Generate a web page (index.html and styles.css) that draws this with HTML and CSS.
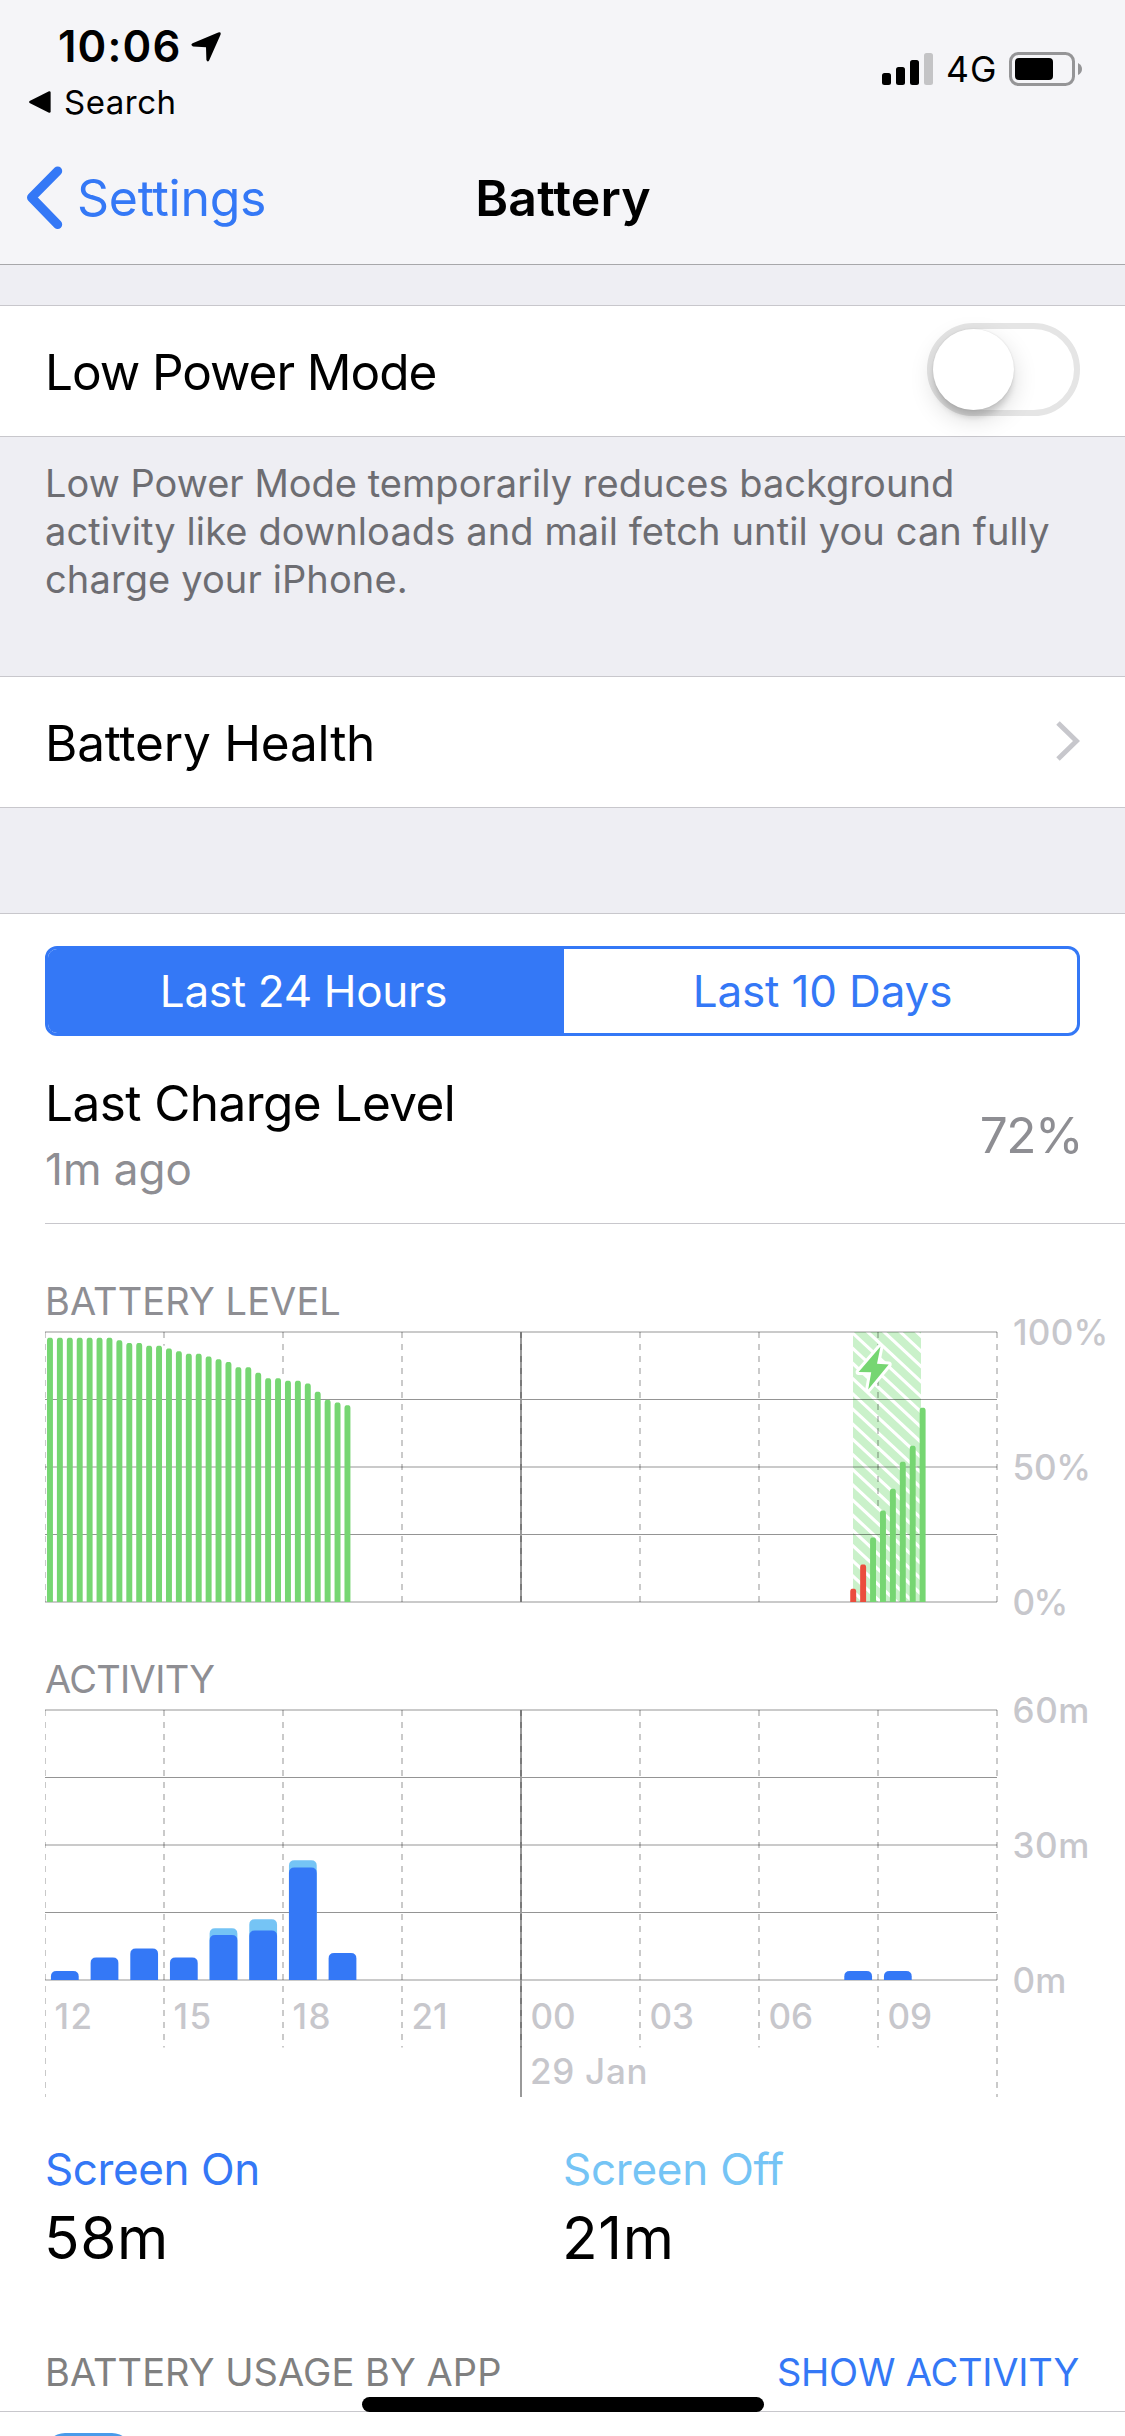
FILE: index.html
```
<!DOCTYPE html>
<html lang="en">
<head>
<meta charset="utf-8">
<title>Battery</title>
<link rel="stylesheet" href="styles.css">
</head>
<body>
<header class="header">
  <div class="status">
    <div class="status-left">
      <div class="time">10:06
        <svg class="location" width="30" height="30" viewBox="0 0 30 30"><path d="M1.6 11.2 L27.2.6 Q30.6-.4 29.4 3 L18.2 28.2 Q16.6 30.8 15.4 28 L15 15.2 L2 14.4 Q-1 13 1.6 11.2Z"/></svg>
      </div>
      <div class="return">
        <svg width="22" height="22" viewBox="0 0 22 22"><path d="M.6 10 L20 .3 Q21.6 0 21.6 1.6 V20.4 Q21.6 22 20 21.7 L.6 12 Q-.4 11 .6 10Z"/></svg>
        <span>Search</span>
      </div>
    </div>
    <div class="status-right">
      <svg class="signal" width="51" height="32" viewBox="0 0 51 32">
        <rect x="0" y="20" width="9" height="12" rx="2.5"/>
        <rect x="14" y="14" width="9" height="18" rx="2.5"/>
        <rect x="28" y="7" width="9" height="25" rx="2.5"/>
        <rect class="signal-off" x="42" y="0" width="9" height="32" rx="2.5"/>
      </svg>
      <span class="network">4G</span>
      <svg class="battery" width="74" height="34" viewBox="0 0 74 34">
        <rect class="battery-shell" x="1.5" y="1.5" width="63" height="31" rx="8"/>
        <rect x="6" y="6" width="38" height="22" rx="4"/>
        <path class="battery-nub" d="M69 11 Q73 13 73 17 Q73 21 69 23Z"/>
      </svg>
    </div>
  </div>
  <nav class="nav">
    <a class="back">
      <svg width="38" height="64" viewBox="0 0 38 64"><path d="M32.7 5 L6.5 31.5 L32.7 58.5"/></svg>
      <span>Settings</span>
    </a>
    <h1 class="title">Battery</h1>
  </nav>
</header>

<main>
  <section class="group first">
    <span class="low-power">Low Power Mode</span>
    <span class="switch"><span class="knob"></span></span>
  </section>
  <p class="footnote"><span class="footnote-lead">Low Power Mode temporarily reduces background</span><br>activity like downloads and mail fetch until you can fully<br>charge your iPhone.</p>
  <section class="group">
    <span class="health">Battery Health</span>
    <svg class="chevron" width="24" height="40" viewBox="0 0 24 40"><path d="M2 2 L20.5 20 L2 38"/></svg>
  </section>

  <section class="panel">
    <div class="segmented">
      <span class="segment active">Last 24 Hours</span>
      <span class="segment days">Last 10 Days</span>
    </div>
    <div class="charge">
      <div>
        <div class="charge-title">Last Charge Level</div>
        <div class="charge-time">1m ago</div>
      </div>
      <div class="charge-value">72%</div>
    </div>

    <h2 class="caption level-caption">BATTERY LEVEL</h2>
    <svg class="chart" id="level" width="1125" height="332" viewBox="0 0 1125 332"></svg>
    <h2 class="caption activity-caption">ACTIVITY</h2>
    <svg class="chart" id="activity" width="1125" height="441" viewBox="0 0 1125 441"></svg>

    <div class="totals">
      <div>
        <div class="total-label on">Screen On</div>
        <div class="total-value">58m</div>
      </div>
      <div>
        <div class="total-label off">Screen Off</div>
        <div class="total-value">21m</div>
      </div>
    </div>
    <div class="usage">
      <span class="usage-title">BATTERY USAGE BY APP</span>
      <a class="usage-link">SHOW ACTIVITY</a>
    </div>
    <div class="app-row"><span class="app-icon"></span></div>
  </section>
</main>
<div class="home-indicator"></div>
<script src="charts.js"></script>
</body>
</html>
```
FILE: styles.css
```
* { box-sizing: border-box; }
body {
  margin: 0;
  position: relative;
  width: 1125px;
  height: 2436px;
  overflow: hidden;
  background: #eeeef3;
  color: #000;
  font-family: Inter, "Liberation Sans", sans-serif;
}
svg { display: block; flex: none; }
h1, h2, p { margin: 0; font-weight: 400; }

.header {
  height: 265px;
  background: #f5f5f8;
  border-bottom: 1px solid #a7a7aa;
}
.status {
  display: flex;
  justify-content: space-between;
  height: 132px;
  padding: 21px 42px 0 29px;
}
.time {
  display: flex;
  padding-left: 29px;
  font-size: 43.6px;
  line-height: 52px;
  font-weight: 600;
  letter-spacing: 1.16px;
}
.location { margin: 11px 0 0 9px; }
.return {
  display: flex;
  align-items: center;
  gap: 13px;
  margin-top: 9px;
  font-size: 33px;
  line-height: 40px;
  letter-spacing: .5px;
}
.status-right { display: flex; align-items: flex-start; padding-top: 28px; }
.signal { margin-top: 4px; }
.signal-off { fill: #c4c4c6; }
.network {
  width: 76px;
  padding-left: 13px;
  font-size: 35.5px;
  line-height: 42px;
  letter-spacing: 1px;
}
.battery { margin-top: 3px; }
.battery-shell { fill: none; stroke: #959597; stroke-width: 3; }
.battery-nub { fill: #959597; }

.nav {
  display: grid;
  grid-template-columns: 1fr auto 1fr;
  align-items: center;
  height: 132px;
  padding-left: 25px;
  padding-right: 24px;
  font-size: 50px;
  line-height: 60px;
}
.back {
  display: flex;
  align-items: center;
  gap: 14px;
  color: #3478f6;
  letter-spacing: -.29px;
}
.back path { fill: none; stroke: #3478f6; stroke-width: 9; stroke-linecap: round; stroke-linejoin: round; }
.title { font-size: 50px; font-weight: 600; letter-spacing: .15px; }

.group {
  display: flex;
  align-items: center;
  justify-content: space-between;
  height: 132px;
  padding: 0 45px;
  background: #fff;
  border-top: 1px solid #c8c7cc;
  border-bottom: 1px solid #c8c7cc;
  font-size: 49.5px;
  line-height: 62px;
}
.first { margin-top: 40px; }
.low-power { padding-top: 2px; letter-spacing: -1.05px; }
.health { padding-top: 2px; letter-spacing: -.2px; }
.switch {
  align-self: flex-start;
  width: 153px;
  height: 93px;
  margin-top: 17px;
  border: 6px solid #e5e5e5;
  border-radius: 47px;
}
.knob {
  display: block;
  width: 81px;
  height: 81px;
  border-radius: 50%;
  background: #fff;
  box-shadow: 0 9px 24px rgba(0, 0, 0, .15), 0 9px 6px -2px rgba(0, 0, 0, .14), 0 0 2px rgba(0, 0, 0, .12);
}
.chevron { margin-bottom: 3px; }
.chevron path { fill: none; stroke: #c7c7cc; stroke-width: 5; }
.footnote {
  padding: 22px 45px 73px;
  color: #6d6d72;
  font-size: 38px;
  line-height: 48px;
  letter-spacing: .12px;
}
.footnote-lead { letter-spacing: .03px; }

.panel {
  margin-top: 105px;
  background: #fff;
  border-top: 1px solid #c8c7cc;
}
.segmented {
  display: flex;
  height: 90px;
  margin: 32px 45px 0;
  border: 3px solid #3478f6;
  border-radius: 12px;
  overflow: hidden;
}
.segment {
  flex: 1;
  display: flex;
  align-items: center;
  justify-content: center;
  color: #3478f6;
  font-size: 44px;
  letter-spacing: -.32px;
}
.segment.active { flex: none; width: 516px; padding-right: 5px; background: #3478f6; color: #fff; }
.segment.days { padding-left: 4px; letter-spacing: -.16px; }
.charge {
  display: flex;
  justify-content: space-between;
  height: 188px;
  margin-left: 45px;
  padding: 37px 43px 0 0;
  border-bottom: 1px solid #c8c7cc;
}
.charge-title { font-size: 49.5px; line-height: 60px; letter-spacing: -.56px; }
.charge-time { margin-top: 10px; color: #8e8e93; font-size: 44px; line-height: 52px; }
.charge-value { padding-top: 32px; color: #8e8e93; font-size: 49.5px; line-height: 60px; letter-spacing: -1.5px; }

.caption {
  padding-left: 45px;
  color: #8e8e93;
  font-size: 38px;
  line-height: 46px;
}
.level-caption { padding-top: 54px; letter-spacing: .1px; }
.activity-caption { letter-spacing: -.7px; }

.chart { overflow: visible; }
.chart text { fill: #c7c7cc; font-size: 35px; font-weight: 500; }
.grid { stroke: #000; stroke-opacity: .42; stroke-width: 1; }
.edge { stroke-opacity: .21; }
.dashed { stroke-dasharray: 6 6; }
.midnight { stroke: #999; stroke-width: 2; }
.charging { fill: #caf1ca; }
.stripe { fill: #fff; }
.bolt { fill: #76d672; stroke: #fff; stroke-width: 6; stroke-linejoin: round; paint-order: stroke; }
.charged { fill: #76d672; }
.low { fill: #eb4d3d; }
.screen-on { fill: #3478f6; }
.screen-off { fill: #75c4f5; }

.totals { display: grid; grid-template-columns: 518px 1fr; padding-left: 45px; }
.total-label { font-size: 44px; line-height: 52px; }
.total-label.on { color: #3478f6; letter-spacing: -.4px; }
.total-label.off { color: #75c4f5; letter-spacing: -.25px; }
.total-value { margin: 8px 0 0 -1px; font-size: 58.5px; line-height: 70px; letter-spacing: .6px; }
.usage {
  display: flex;
  justify-content: space-between;
  padding: 76px 46px 16px 45px;
  border-bottom: 1px solid #c8c7cc;
  font-size: 38px;
  line-height: 46px;
}
.usage-title { color: #808080; letter-spacing: .06px; }
.usage-link { color: #3478f6; letter-spacing: -.2px; }
.app-row { height: 132px; padding: 21px 45px; }
.app-icon { display: block; width: 87px; height: 87px; border-radius: 20px; background: #4a9bea; }

.home-indicator {
  position: absolute;
  left: 362px;
  top: 2397px;
  width: 402px;
  height: 15px;
  border-radius: 8px;
  background: #000;
}
```
FILE: charts.js
```
// Both plots share one geometry: 24 hours across 952px, 270px tall.
const LEFT = 45, TOP = 8, WIDTH = 952, HEIGHT = 270;
const BASE = TOP + HEIGHT, RIGHT = LEFT + WIDTH;
const HOUR = WIDTH / 24;

const line = (x1, y1, x2, y2, cls) =>
  `<line class="${cls}" x1="${x1}" y1="${y1}" x2="${x2}" y2="${y2}"/>`;
const label = (x, y, text, spacing) =>
  `<text x="${x}" y="${y}" letter-spacing="${spacing}">${text}</text>`;
const column = (cx, width, height, radius, cls) => {
  const x = cx - width / 2, r = Math.min(radius, height), y = BASE - height;
  return `<path class="${cls}" d="M${x} ${BASE}V${y + r}q0 ${-r} ${r} ${-r}H${x + width - r}q${r} 0 ${r} ${r}V${BASE}Z"/>`;
};

// lineEnds gives the bottom of each of the nine vertical lines
function grid(lineEnds) {
  let out = '';
  for (let i = 0; i <= 4; i++) {
    const y = TOP + i * HEIGHT / 4;
    out += line(LEFT, y, RIGHT, y, 'grid');
  }
  lineEnds.forEach((end, i) => {
    const x = LEFT + i * HOUR * 3;
    if (i === 0) {
      out += line(x + 0.5, TOP, x + 0.5, end, 'grid dashed edge');
    } else if (i === 4) {
      out += line(x, TOP, x, end, 'midnight') + line(x, TOP, x, Math.min(end, 345.5), 'grid dashed');
    } else {
      out += line(x, TOP, x, end, 'grid dashed');
    }
  });
  return out;
}

// Battery percentage per quarter hour: [slot, level]
const evening = [98, 98, 98, 98, 98, 98, 98, 97, 96, 96, 95, 95, 94, 93, 92, 92, 91, 90, 89, 87, 87, 85, 83, 83, 82, 82, 81, 78, 75, 74, 73];
const morning = [5, 14, 24, 34, 42, 52, 58, 72];
const levels = evening.map((v, i) => [i, v]).concat(morning.map((v, i) => [i + 81, v]));

let level = '<defs><clipPath id="charge-clip"><rect x="853" y="8" width="68" height="270"/></clipPath></defs>';
level += '<g clip-path="url(#charge-clip)"><rect class="charging" x="853" y="8" width="68" height="270"/>';
for (let i = -20; i < 5; i++) {
  const x = 865.5 + i * 16.3;
  level += `<path class="stripe" d="M${x} 8h4.6l290 270h-4.6z"/>`;
}
// Hour lines stop where the columns beside them begin
level += '</g>' + grid([BASE, 21.7, 53.9, BASE, BASE, BASE, BASE, 186, BASE]);
level += levels.map(([slot, v]) =>
  column(LEFT + HOUR / 4 * (slot + 0.5), 5.95, v * HEIGHT / 100, 3, v <= 20 ? 'low' : 'charged')).join('');
level += '<path class="bolt" d="M880.5 22.5 L877 39.8 L888.7 40.6 L868.2 65.4 L871.2 48.2 L858.6 48Z"/>';
level += label(1013, 21, '100%', 0.3) + label(1012.5, 156, '50%', -0.2) + label(1012.5, 291, '0%', -1.5);
document.getElementById('level').innerHTML = level;

// Minutes per hour: [hour slot, total, screen on]
const activity = [[0, 2, 2], [1, 5, 5], [2, 7, 7], [3, 5, 5], [4, 11.5, 10], [5, 13.5, 11], [6, 26.6, 25], [7, 6, 6], [20, 2, 2], [21, 2, 2]];
let act = grid([395, 345.5, 345.5, 345.5, 395, 345.5, 345.5, 345.5, 395]);
act += activity.map(([slot, total, on]) => {
  const cx = LEFT + HOUR * (slot + 0.5), m = HEIGHT / 60, w = HOUR * 0.7;
  return (total > on ? column(cx, w, total * m, 5.5, 'screen-off') : '') + column(cx, w, on * m, 5.5, 'screen-on');
}).join('');
['12', '15', '18', '21', '00', '03', '06', '09'].forEach((t, i) => {
  act += label(LEFT + i * HOUR * 3 + 9.5, 327, t, i < 3 ? 1.5 : 0);
});
act += label(530, 382, '29 Jan', 0.7);
act += label(1012.5, 21, '60m', 0.6) + label(1012.5, 156, '30m', 0.6) + label(1012.5, 291, '0m', 0.2);
document.getElementById('activity').innerHTML = act;
```
